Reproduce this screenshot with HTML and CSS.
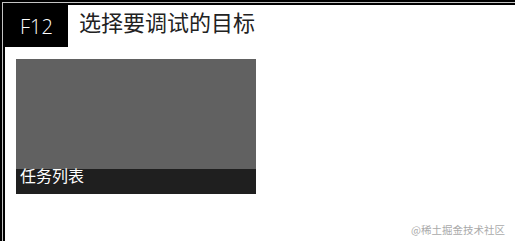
FILE: index.html
```html
<!DOCTYPE html>
<html lang="zh">
<head>
<meta charset="utf-8">
<link rel="stylesheet" href="styles.css">
</head>
<body>
<div class="frame">
  <div class="rule">
    <div class="content">
      <header class="header">
        <div class="key">F12</div>
        <h1 class="title">选择要调试的目标</h1>
      </header>
      <div class="targets">
        <div class="card">
          <div class="preview"></div>
          <div class="label">任务列表</div>
        </div>
      </div>
    </div>
  </div>
</div>
<div class="watermark">@稀土掘金技术社区</div>
</body>
</html>
```
FILE: styles.css
```css
html, body {
  margin: 0;
  padding: 0;
  background: #fff;
  width: 515px;
  height: 243px;
  overflow: hidden;
  font-family: "Noto Sans", "Noto Sans CJK SC", sans-serif;
}
.frame {
  border-top: 2px solid #000;
  border-left: 2px solid #000;
  height: 241px;
  box-sizing: border-box;
}
.rule {
  border-top: 1px solid #c4c4c4;
  border-left: 1px solid #c4c4c4;
  height: 100%;
  box-sizing: border-box;
}
.content {
  border-top: 2px solid #000;
  border-left: 2px solid #000;
  height: 100%;
  box-sizing: border-box;
}
.header {
  display: flex;
  align-items: flex-start;
}
.key {
  background: #000;
  color: #fff;
  width: 63px;
  height: 42px;
  display: flex;
  align-items: center;
  justify-content: center;
  font-size: 20px;
  font-weight: 300;
  font-family: "Open Sans", "Noto Sans", sans-serif;
  margin-top: -2px;
  margin-left: -2px;
  padding-top: 2px;
  padding-left: 2px;
  box-sizing: content-box;
}
.title {
  margin: 0 0 0 11px;
  font-weight: normal;
  font-size: 22px;
  line-height: 33px;
  color: #222;
  font-family: "Noto Sans CJK SC", sans-serif;
}
.targets {
  display: flex;
  padding: 12px 0 0 11px;
}
.card {
  width: 240px;
  height: 135px;
  display: flex;
  flex-direction: column;
  background: #616161;
}
.preview {
  flex: 1;
}
.label {
  height: 25px;
  background: #1f1f1f;
  color: #fff;
  font-size: 16px;
  line-height: 12px;
  padding-left: 4px;
  font-family: "Noto Sans CJK SC", sans-serif;
}
.watermark {
  position: absolute;
  right: 10px;
  bottom: 6px;
  font-size: 10.5px;
  color: #aaa;
  font-family: "Noto Sans CJK SC", sans-serif;
}
```
